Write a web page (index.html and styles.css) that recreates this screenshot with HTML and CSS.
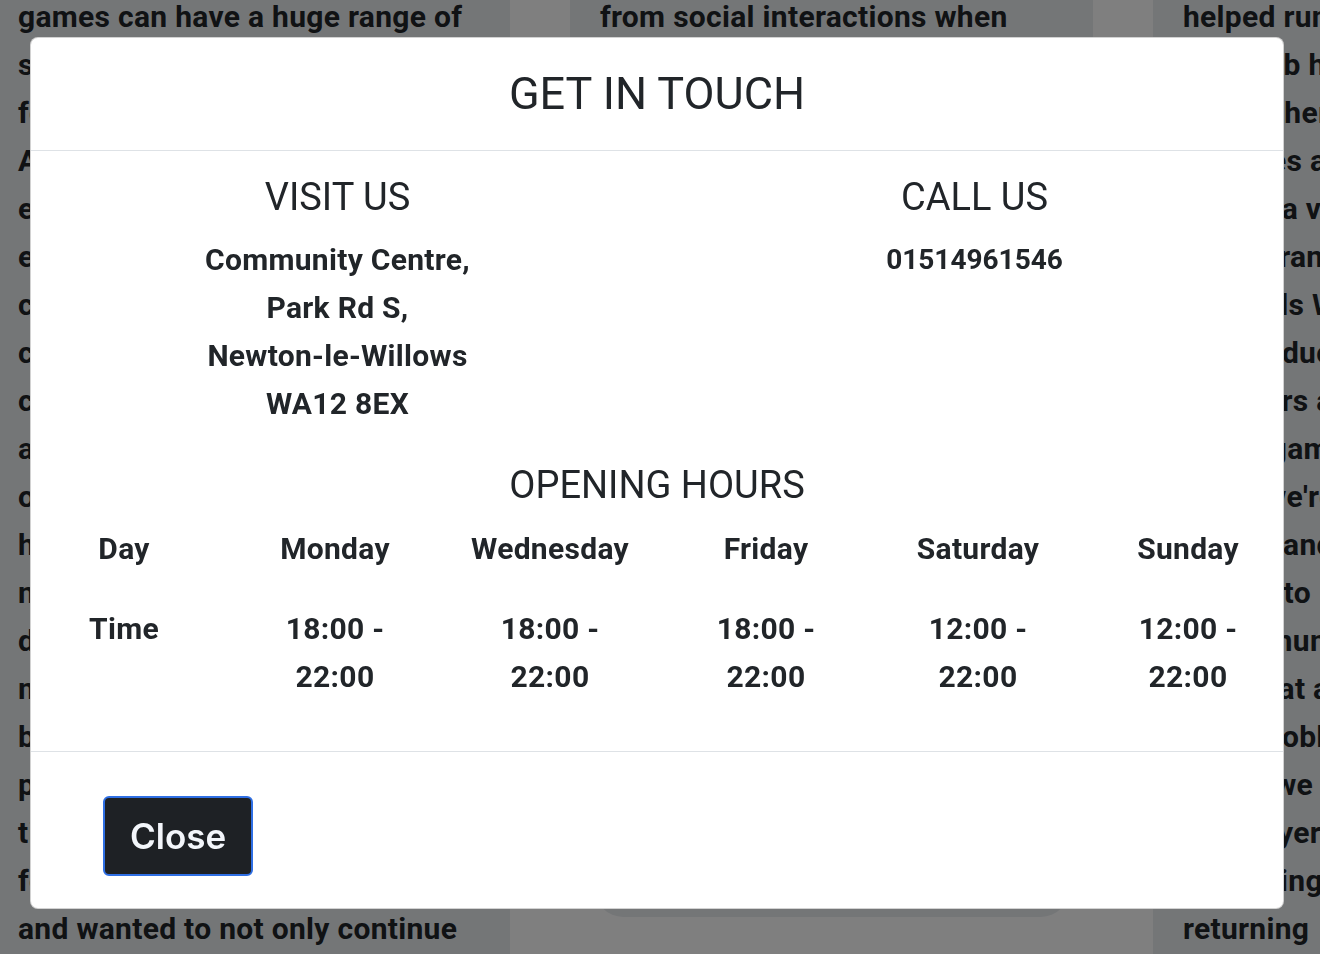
FILE: index.html
```html
<!DOCTYPE html>
<html lang="en">
<head>
    <meta charset="UTF-8">
    <meta name="viewport" content="width=device-width, initial-scale=1.0">
    <title>Get In Touch</title>
    <link rel="stylesheet" href="styles.css">
</head>
<body>
    <div class="page">
        <div class="col col-left">
            <div class="col-text">
                <p>games can have a huge range of</p>
                <p>styles and themes, catering</p>
                <p>for every taste and age.</p>
                <p>Across the years we have</p>
                <p>enjoyed sharing our passion</p>
                <p>each week with players of</p>
                <p>countless backgrounds, and</p>
                <p>creating a friendly space</p>
                <p>centred on play and</p>
                <p>a sense of belonging for</p>
                <p>our members. The club</p>
                <p>has grown from a small</p>
                <p>number of friends who</p>
                <p>discovered the hobby</p>
                <p>many years ago, and it</p>
                <p>became a regular part</p>
                <p>planned around our</p>
                <p>time together. Our</p>
                <p>founders loved the games</p>
                <p>and wanted to not only continue</p>
            </div>
        </div>
        <div class="col col-mid">
            <div class="mid-top">
                <div class="col-text">
                    <p>from social interactions when</p>
                </div>
            </div>
            <div class="mid-card"></div>
        </div>
        <div class="col col-right">
            <div class="col-text">
                <p>helped run</p>
                <p>this club has</p>
                <p>each other</p>
                <p>if games are</p>
                <p>there's a very</p>
                <p>a wide range</p>
                <p>a friends We</p>
                <p>to introduce</p>
                <p>8 players and</p>
                <p>board games</p>
                <p>since we're</p>
                <p>games and</p>
                <p>people to</p>
                <p>a community</p>
                <p>fans that are</p>
                <p>loved hobby</p>
                <p>where we</p>
                <p>our players</p>
                <p>by playing along</p>
                <p>returning</p>
            </div>
        </div>
    </div>

    <div class="backdrop"></div>

    <div class="modal">
        <div class="modal-content">
            <div class="modal-header">
                <h2>GET IN TOUCH</h2>
            </div>
            <div class="modal-body">
                <div class="contact-grid">
                    <div class="contact-block">
                        <h3>VISIT US</h3>
                        <p class="address">Community Centre,<br>Park Rd S,<br>Newton-le-Willows<br>WA12 8EX</p>
                    </div>
                    <div class="contact-block">
                        <h3>CALL US</h3>
                        <p class="phone">01514961546</p>
                    </div>
                </div>
                <h3 class="hours-title">OPENING HOURS</h3>
                <table class="hours">
                    <colgroup>
                        <col style="width: 210px">
                        <col style="width: 212px">
                        <col style="width: 218px">
                        <col style="width: 214px">
                        <col style="width: 210px">
                        <col style="width: 210px">
                    </colgroup>
                    <tr>
                        <th>Day</th>
                        <th>Monday</th>
                        <th>Wednesday</th>
                        <th>Friday</th>
                        <th>Saturday</th>
                        <th>Sunday</th>
                    </tr>
                    <tr>
                        <th>Time</th>
                        <td>18:00 -<br>22:00</td>
                        <td>18:00 -<br>22:00</td>
                        <td>18:00 -<br>22:00</td>
                        <td>12:00 -<br>22:00</td>
                        <td>12:00 -<br>22:00</td>
                    </tr>
                </table>
            </div>
            <div class="modal-footer">
                <button class="btn-close">Close</button>
            </div>
        </div>
    </div>
</body>
</html>
```

FILE: styles.css
```css
body {
    margin: 0;
    font-family: Roboto, "Liberation Sans", sans-serif;
    color: #212529;
    background: #fff;
    overflow: hidden;
}
.page {
    display: flex;
    gap: 60px;
    height: 954px;
}
.col {
    box-sizing: border-box;
    overflow: hidden;
}
.col-left {
    width: 510px;
    background: #e9ecef;
    padding-left: 18px;
}
.col-mid {
    width: 523px;
    display: flex;
    flex-direction: column;
}
.mid-top {
    background: #e9ecef;
    padding-left: 30px;
    height: 300px;
}
.mid-card {
    background: #e9ecef;
    margin: 0 24px 0 25px;
    height: 617px;
    border-radius: 0 0 28px 28px;
}
.col-right {
    flex: 1;
    background: #e9ecef;
    padding-left: 30px;
}
.col-text {
    margin-top: -7px;
}
.col-text p {
    margin: 0;
    font-size: 30px;
    font-weight: 700;
    line-height: 48px;
    letter-spacing: 0.3px;
    white-space: nowrap;
}

.backdrop {
    position: fixed;
    top: 0;
    left: 0;
    width: 100%;
    height: 100%;
    background: rgba(0, 0, 0, 0.5);
}
.modal {
    position: fixed;
    top: 37px;
    left: 30px;
    width: 1254px;
}
.modal-content {
    background: #fff;
    border: 1px solid rgba(0, 0, 0, 0.175);
    border-radius: 8px;
    height: 872px;
    box-sizing: border-box;
    display: flex;
    flex-direction: column;
}
.modal-header {
    padding: 29px 16px;
    border-bottom: 1px solid #dee2e6;
    text-align: center;
}
.modal-header h2 {
    margin: 0;
    font-size: 45px;
    font-weight: 400;
    line-height: 54px;
}
.modal-body {
    padding: 22px 0 34px;
}
.contact-grid {
    display: grid;
    grid-template-columns: 1fr 1fr;
    margin: 0 -10px 0 -12px;
    text-align: center;
}
.contact-block h3,
.hours-title {
    margin: 0 0 15px;
    font-size: 38px;
    font-weight: 400;
    line-height: 48px;
}
.contact-block p {
    margin: 0;
    font-size: 28px;
    font-weight: 700;
    line-height: 48px;
}
.contact-block .address {
    font-size: 30px;
    letter-spacing: 0.3px;
}
.hours-title {
    margin: 33px 0 0;
    text-align: center;
}
.hours {
    width: 1274px;
    margin-left: -12px;
    table-layout: fixed;
    border-collapse: collapse;
}
.hours th,
.hours td {
    padding: 16px 0;
    text-align: center;
    vertical-align: top;
    font-size: 30px;
    font-weight: 700;
    line-height: 48px;
    letter-spacing: 0.3px;
}
.modal-footer {
    flex: 1;
    border-top: 1px solid #dee2e6;
    padding: 44px 0 0 72px;
}
.btn-close {
    font-family: Inter, "Liberation Sans", sans-serif;
    font-size: 35px;
    font-weight: 600;
    line-height: 52px;
    padding: 12px 25px;
    color: #f3f6fb;
    background: #1e2125;
    border: 2px solid #2f6fe4;
    border-radius: 6px;
    cursor: pointer;
}
```
